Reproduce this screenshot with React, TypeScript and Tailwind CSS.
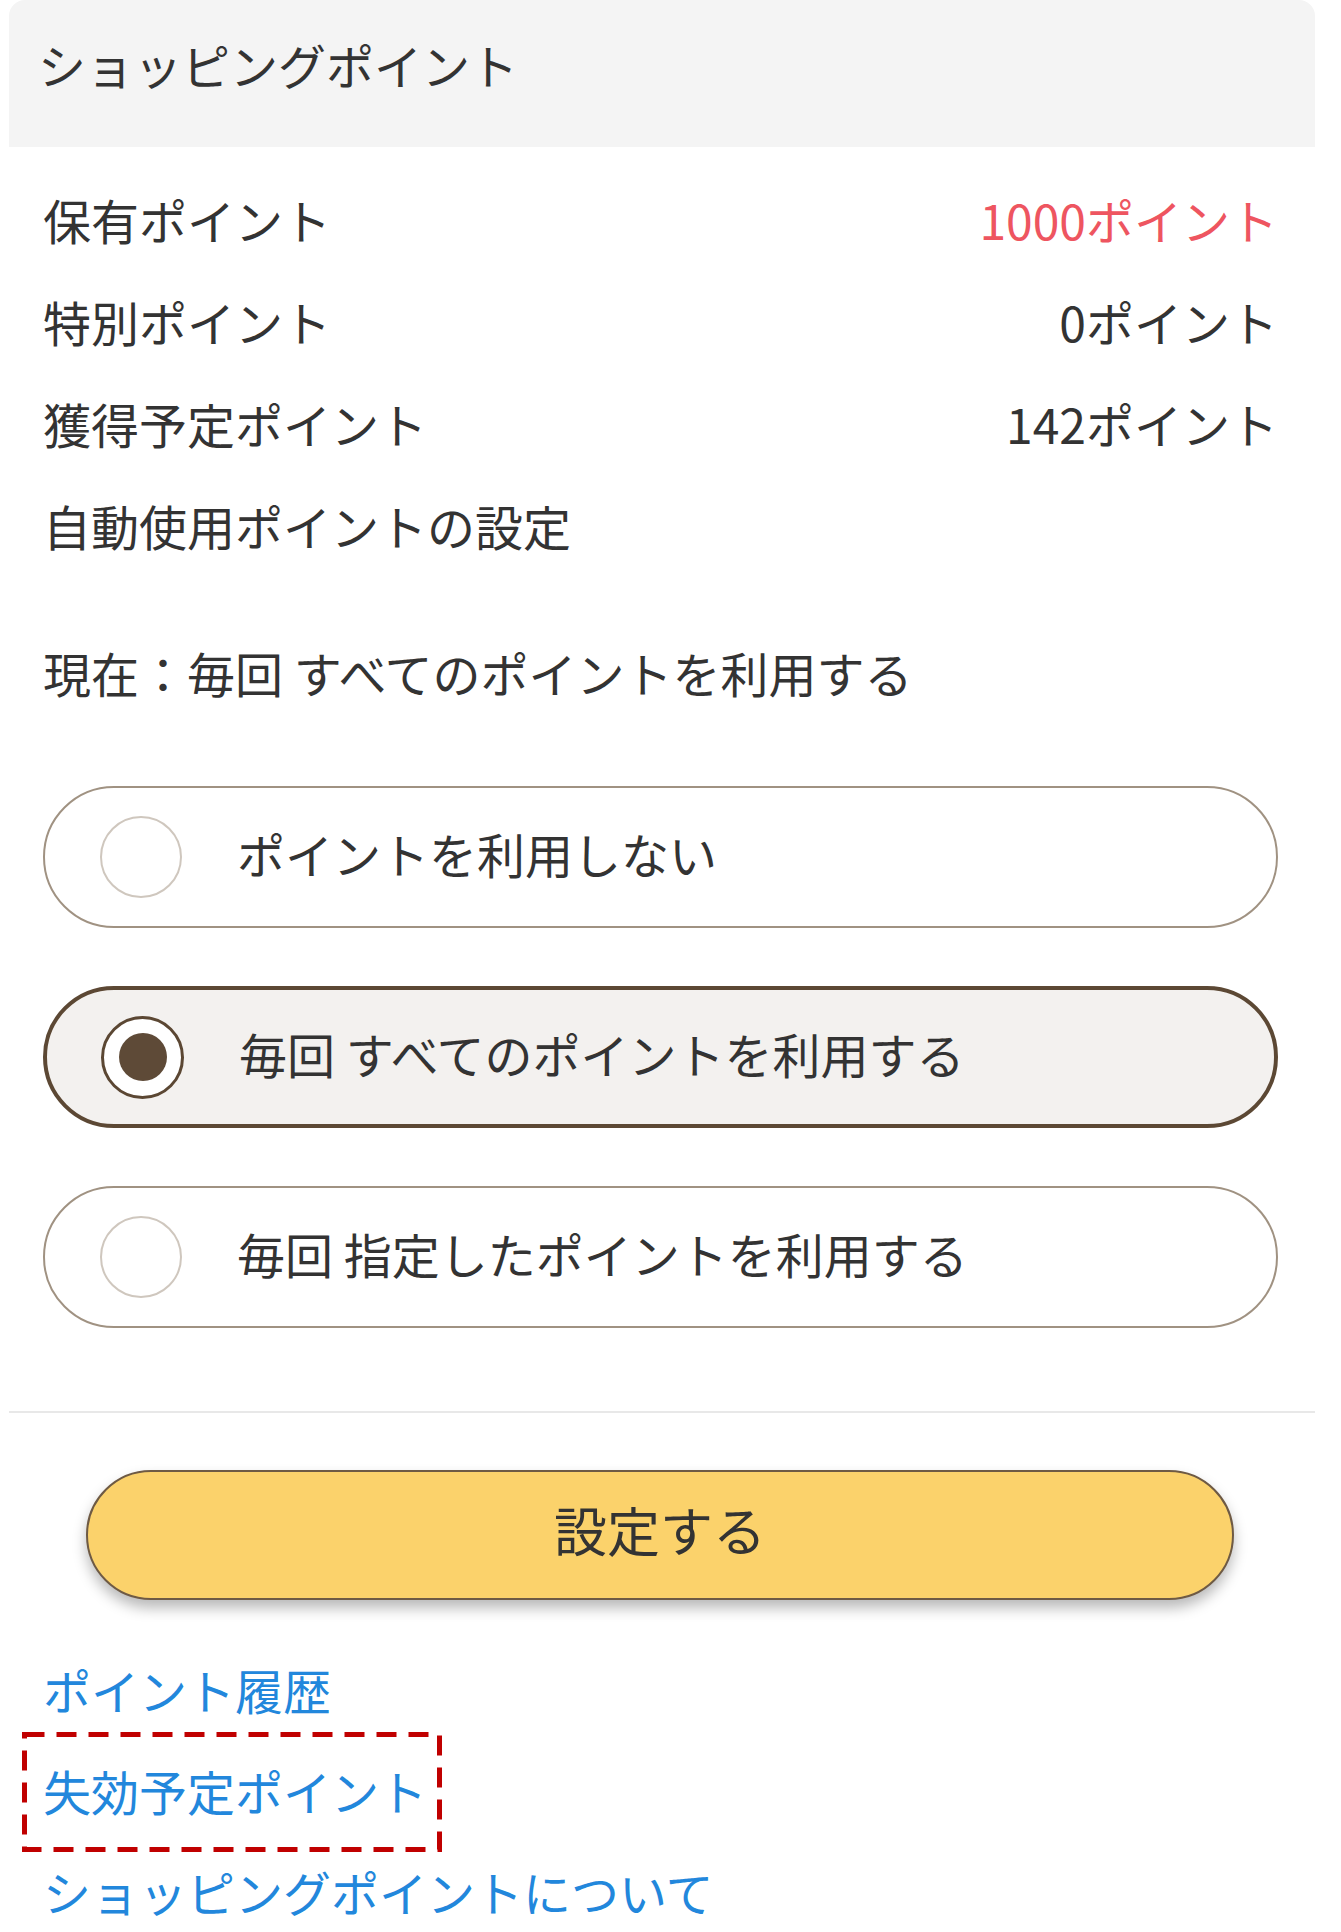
const options = [
  { id: 'none', label: 'ポイントを利用しない' },
  { id: 'all', label: '毎回 すべてのポイントを利用する' },
  { id: 'some', label: '毎回 指定したポイントを利用する' },
];

const balances = [
  { label: '保有ポイント', value: '1000ポイント', highlight: true },
  { label: '特別ポイント', value: '0ポイント', highlight: false },
  { label: '獲得予定ポイント', value: '142ポイント', highlight: false },
];

function Radio({ checked }: { checked: boolean }) {
  if (checked) {
    return (
      <span className="flex h-[83px] w-[83px] shrink-0 items-center justify-center rounded-full border-[3px] border-[#5b4733] bg-white">
        <span className="h-[48px] w-[48px] rounded-full bg-[#5e4a37]" />
      </span>
    );
  }
  return <span className="h-[82px] w-[82px] shrink-0 rounded-full border-2 border-[#cfc7be] bg-white" />;
}

export default function App() {
  const selected = 'all';

  return (
    <div
      className="min-h-[1932px] w-[1341px] bg-white text-[48px] leading-none text-[#333333]"
      style={{ fontFamily: '"Noto Sans CJK JP", "Noto Sans", sans-serif' }}
    >
      <div className="ml-[9px] w-[1306px]">
        <div className="flex h-[147px] items-center rounded-t-[16px] bg-[#f4f4f4] pb-[20px] pl-[29px]">
          ショッピングポイント
        </div>

        <div className="pl-[34px] pr-[37px] pt-[24px]">
          {balances.map((b) => (
            <div key={b.label} className="flex h-[102px] items-center justify-between pb-[6px]">
              <span>{b.label}</span>
              <span className={b.highlight ? 'text-[#ee5560]' : ''}>{b.value}</span>
            </div>
          ))}
          <div className="flex h-[102px] items-center pb-[6px]">自動使用ポイントの設定</div>

          <div className="mt-[45px] flex h-[102px] items-center pb-[7px]">現在：毎回 すべてのポイントを利用する</div>

          <div className="mt-[60px] flex flex-col gap-[58px]">
            {options.map((o) => {
              const on = o.id === selected;
              return (
                <label
                  key={o.id}
                  className={
                    on
                      ? 'flex h-[142px] items-center rounded-full border-[4px] border-[#5c4834] bg-[#f3f1ef] pl-[54px]'
                      : 'flex h-[142px] items-center rounded-full border-2 border-[#a09282] bg-white pl-[55px]'
                  }
                >
                  <Radio checked={on} />
                  <span className="mb-[8px] ml-[55px]">{o.label}</span>
                </label>
              );
            })}
          </div>
        </div>

        <div className="mt-[83px] h-[2px] bg-[#e8e8e8]" />

        <button className="ml-[77px] mt-[57px] flex h-[130px] w-[1148px] items-center justify-center rounded-full border-2 border-[#6e5a44] bg-[#fbd26b] pb-[12px] text-[53px] text-[#333333] shadow-[0_8px_14px_rgba(0,0,0,0.28)]">
          設定する
        </button>

        <div className="mt-[40px] text-[#2287dc]">
          <div className="flex h-[101px] items-center pb-[4px] pl-[34px]">ポイント履歴</div>
          <div className="relative flex h-[101px] items-center pb-[4px] pl-[34px]">
            失効予定ポイント
            <svg className="absolute left-[13px] top-[-9px]" width="420" height="120" viewBox="0 0 420 120">
              <rect
                x="2.5"
                y="2.5"
                width="415"
                height="115"
                fill="none"
                stroke="#c00000"
                strokeWidth="5"
                strokeDasharray="20 12"
              />
            </svg>
          </div>
          <div className="flex h-[101px] items-center pb-[4px] pl-[34px]">ショッピングポイントについて</div>
        </div>
      </div>
    </div>
  );
}
